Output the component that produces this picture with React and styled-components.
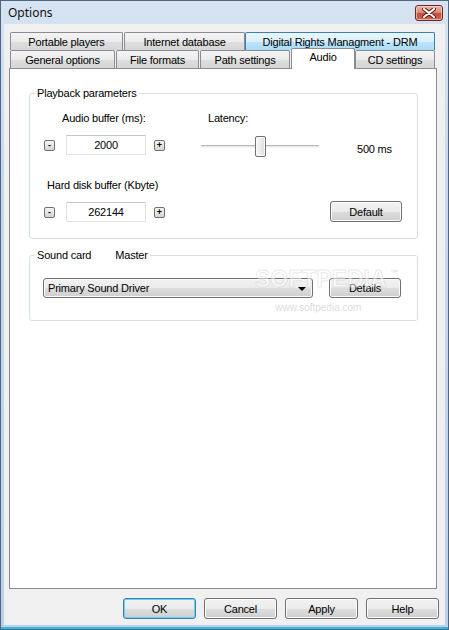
import React from 'react';
import styled, { createGlobalStyle, css } from 'styled-components';

const GlobalStyle = createGlobalStyle`
  html, body { margin: 0; padding: 0; background: #ffffff; }
  body {
    font-family: "Liberation Sans", Arial, sans-serif;
    font-size: 11px;
    color: #000;
  }
  * { box-sizing: border-box; }
`;

const Window = styled.div`
  position: relative;
  width: 449px;
  height: 630px;
  display: flex;
  flex-direction: column;
  border: 1px solid #4f6680;
  background: linear-gradient(180deg, #d6e3f2 0%, #c6d8ed 30%, #bcd1e9 100%);
  box-shadow: inset 0 -2px 0 #35b4e6;
  padding: 0 3px 4px 3px;
  overflow: hidden;
`;

const TitleBar = styled.div`
  height: 23px;
  display: flex;
  align-items: center;
  justify-content: space-between;
  padding: 0 2px 0 4px;
`;

const Title = styled.span`
  font-family: "Noto Sans", "Liberation Sans", sans-serif;
  font-size: 12px;
  color: #111;
  margin-top: -1px;
`;

const CloseButton = styled.div`
  width: 28px;
  height: 16px;
  border: 1px solid #6a2a22;
  border-radius: 3px;
  background: linear-gradient(180deg, #ecb3a6 0%, #d98c7d 45%, #c4493a 55%, #d46a55 100%);
  box-shadow: inset 0 0 0 1px rgba(255, 220, 210, 0.6);
  display: flex;
  align-items: center;
  justify-content: center;
  margin-top: 1px;
`;

const Client = styled.div`
  flex: 1;
  background: #f0f0f0;
  display: flex;
  flex-direction: column;
  padding: 8px 6px 0 5px;
`;

const TabRow = styled.div`
  display: flex;
  width: 425px;
  margin-left: 1px;
  height: 18px;
  align-items: flex-end;
`;

const Tab = styled.div`
  position: relative;
  width: ${p => p.$w}px;
  flex: ${p => (p.$fill ? '1' : 'none')};
  height: 18px;
  margin-right: ${p => p.$gap || 0}px;
  border: 1px solid #898c95;
  border-bottom: none;
  border-radius: 2px 2px 0 0;
  background: linear-gradient(180deg, #f4f4f4 0%, #ebebeb 50%, #dedede 51%, #d6d6d6 100%);
  display: flex;
  align-items: center;
  justify-content: center;
  padding-top: 1px;
  white-space: nowrap;
  letter-spacing: -0.2px;

  ${p => p.$hover && css`
    border-color: #3c7fb1;
    background: linear-gradient(180deg, #eaf6fd 0%, #d9f0fc 50%, #bee6fd 51%, #a9dbf6 100%);
  `}

  ${p => p.$active && css`
    z-index: 2;
    height: 21px;
    margin-bottom: -1px;
    background: #ffffff;
    align-items: flex-start;
    padding-top: 2px;
  `}
`;

const Panel = styled.div`
  width: 428px;
  height: 521px;
  border: 1px solid #898c95;
  background: #ffffff;
  padding: 24px 0 0 19px;
  display: flex;
  flex-direction: column;
`;

const GroupBox = styled.div`
  position: relative;
  width: 389px;
  height: ${p => p.$h}px;
  margin-top: ${p => p.$mt || 0}px;
  border: 1px solid #d5dfe5;
  border-radius: 3px;
  padding: ${p => p.$pad};
`;

const GroupTitle = styled.div`
  position: absolute;
  top: -7px;
  left: 5px;
  padding: 0 2px;
  background: #ffffff;
  line-height: 13px;
  display: flex;
  gap: ${p => p.$gap || 0}px;
  letter-spacing: -0.2px;
`;

const Line = styled.div`
  display: flex;
  align-items: ${p => p.$align || 'flex-start'};
  justify-content: ${p => p.$justify || 'flex-start'};
  margin-top: ${p => p.$mt || 0}px;
  padding-right: ${p => p.$pr || 0}px;
`;

const Field = styled.div`
  display: flex;
  flex-direction: column;
  width: ${p => p.$w}px;
  margin-left: ${p => p.$ml || 0}px;
`;

const Label = styled.div`
  line-height: 13px;
  padding-left: ${p => p.$indent || 0}px;
  margin-bottom: 10px;
  white-space: nowrap;
  letter-spacing: -0.2px;
`;

const Spinner = styled.div`
  display: flex;
  align-items: center;
  height: 20px;
`;

const MiniButton = styled.div`
  width: 11px;
  height: 11px;
  border: 1px solid #707070;
  border-radius: 2px;
  background: linear-gradient(180deg, #f4f4f4 0%, #e6e6e6 50%, #d4d4d4 100%);
  display: flex;
  align-items: center;
  justify-content: center;
  font-size: 9px;
  line-height: 1;
  font-weight: bold;
  margin-right: ${p => p.$mr || 0}px;
  margin-left: ${p => p.$ml || 0}px;
`;

const TextBox = styled.div`
  width: 80px;
  height: 20px;
  border: 1px solid #dfe2e6;
  border-top-color: #c6c9ce;
  background: #ffffff;
  display: flex;
  align-items: center;
  justify-content: center;
  letter-spacing: -0.2px;
`;

const Slider = styled.div`
  position: relative;
  width: 118px;
  height: 21px;
  margin-top: 1px;
  display: flex;
  align-items: center;
`;

const Track = styled.div`
  width: 100%;
  height: 3px;
  background: #e7eaea;
  border-top: 1px solid #b5b8bb;
  border-bottom: 1px solid #f4f4f4;
`;

const Thumb = styled.div`
  position: absolute;
  top: 0;
  left: ${p => p.$left}px;
  width: 11px;
  height: 21px;
  border: 1px solid #707070;
  border-radius: 2px;
  background: linear-gradient(90deg, #f7f7f7 0%, #ececec 50%, #dcdcdc 100%);
  box-shadow: inset 0 0 0 1px #fbfbfb;
`;

const Value = styled.div`
  margin-left: 38px;
  padding-top: 31px;
  line-height: 13px;
  letter-spacing: -0.2px;
`;

const Button = styled.div`
  width: ${p => p.$w || 72}px;
  height: ${p => p.$h || 21}px;
  border: 1px solid #707070;
  border-radius: 3px;
  background: linear-gradient(180deg, #f2f2f2 0%, #ebebeb 50%, #dddddd 51%, #cfcfcf 100%);
  box-shadow: inset 0 0 0 1px #fbfbfb;
  display: flex;
  align-items: center;
  justify-content: center;
  letter-spacing: -0.2px;
  margin-left: ${p => p.$ml || 0}px;

  ${p => p.$focused && css`
    border-color: #3c7fb1;
    box-shadow: inset 0 0 0 1px #5fd4f7;
  `}
`;

const Select = styled.div`
  width: 270px;
  height: 20px;
  border: 1px solid #707070;
  border-radius: 3px;
  background: linear-gradient(180deg, #f2f2f2 0%, #ebebeb 50%, #dddddd 51%, #cfcfcf 100%);
  box-shadow: inset 0 0 0 1px #fbfbfb;
  display: flex;
  align-items: center;
  justify-content: space-between;
  padding: 0 6px 0 4px;
  letter-spacing: -0.2px;
`;

const Arrow = styled.div`
  width: 0;
  height: 0;
  border-left: 4px solid transparent;
  border-right: 4px solid transparent;
  border-top: 4px solid #000;
  margin-top: 1px;
`;

const ButtonRow = styled.div`
  display: flex;
  justify-content: flex-end;
  gap: 8px;
  margin-top: 9px;
`;

const Watermark = styled.div`
  position: absolute;
  left: 254px;
  top: 259px;
  pointer-events: none;
  display: flex;
  flex-direction: column;
  align-items: center;
`;

const WatermarkBig = styled.div`
  font-family: "Liberation Sans", sans-serif;
  font-size: 23px;
  font-weight: bold;
  letter-spacing: 0;
  color: rgba(255, 255, 255, 0.5);
  -webkit-text-stroke: 1px rgba(200, 200, 200, 0.4);
  line-height: 26px;

  sup {
    font-size: 8px;
    font-weight: normal;
    -webkit-text-stroke: 0;
    color: rgba(190, 190, 190, 0.6);
    vertical-align: 12px;
    margin-left: 3px;
  }
`;

const WatermarkSmall = styled.div`
  font-family: "Liberation Sans", sans-serif;
  font-size: 10px;
  color: rgba(185, 185, 185, 0.5);
  margin-top: 10px;
  margin-right: 16px;
`;

const CloseX = () => (
  <svg width="14" height="10" viewBox="0 0 14 10">
    <path d="M2 1 L12 9 M12 1 L2 9" stroke="#5a1a14" strokeWidth="4" strokeLinecap="round" />
    <path d="M2 1 L12 9 M12 1 L2 9" stroke="#ffffff" strokeWidth="2.2" strokeLinecap="round" />
  </svg>
);

const SpinField = ({ label, indent, value }) => (
  <Field $w={122}>
    <Label $indent={indent}>{label}</Label>
    <Spinner>
      <MiniButton $mr={11}>-</MiniButton>
      <TextBox>{value}</TextBox>
      <MiniButton $ml={8}>+</MiniButton>
    </Spinner>
  </Field>
);

export default function App() {
  return (
    <>
      <GlobalStyle />
      <Window>
        <TitleBar>
          <Title>Options</Title>
          <CloseButton><CloseX /></CloseButton>
        </TitleBar>
        <Client>
          <TabRow>
            <Tab $w={113} $gap={1}>Portable players</Tab>
            <Tab $w={121}>Internet database</Tab>
            <Tab $fill $hover>Digital Rights Managment - DRM</Tab>
          </TabRow>
          <TabRow>
            <Tab $w={105} $gap={1}>General options</Tab>
            <Tab $w={83} $gap={1}>File formats</Tab>
            <Tab $w={90} $gap={1}>Path settings</Tab>
            <Tab $w={64} $active>Audio</Tab>
            <Tab $fill>CD settings</Tab>
          </TabRow>
          <Panel>
            <GroupBox $h={146} $pad="18px 15px 0 14px">
              <GroupTitle>Playback parameters</GroupTitle>
              <Line>
                <SpinField label="Audio buffer (ms):" indent={18} value="2000" />
                <Field $w={118} $ml={35}>
                  <Label $indent={7}>Latency:</Label>
                  <Slider>
                    <Track />
                    <Thumb $left={54} />
                  </Slider>
                </Field>
                <Value>500 ms</Value>
              </Line>
              <Line $mt={22} $align="flex-end" $justify="space-between">
                <SpinField label="Hard disk buffer (Kbyte)" indent={3} value="262144" />
                <Button>Default</Button>
              </Line>
            </GroupBox>
            <GroupBox $h={66} $mt={16} $pad="22px 0 0 13px">
              <GroupTitle $gap={24}>
                <span>Sound card</span>
                <span>Master</span>
              </GroupTitle>
              <Line $align="center">
                <Select>
                  <span>Primary Sound Driver</span>
                  <Arrow />
                </Select>
                <Button $h={20} $ml={16}>Details</Button>
              </Line>
            </GroupBox>
          </Panel>
          <ButtonRow>
            <Button $w={73} $focused>OK</Button>
            <Button $w={73}>Cancel</Button>
            <Button $w={73}>Apply</Button>
            <Button $w={73}>Help</Button>
          </ButtonRow>
        </Client>
        <Watermark>
          <WatermarkBig>SOFTPEDIA<sup>™</sup></WatermarkBig>
          <WatermarkSmall>www.softpedia.com</WatermarkSmall>
        </Watermark>
      </Window>
    </>
  );
}
